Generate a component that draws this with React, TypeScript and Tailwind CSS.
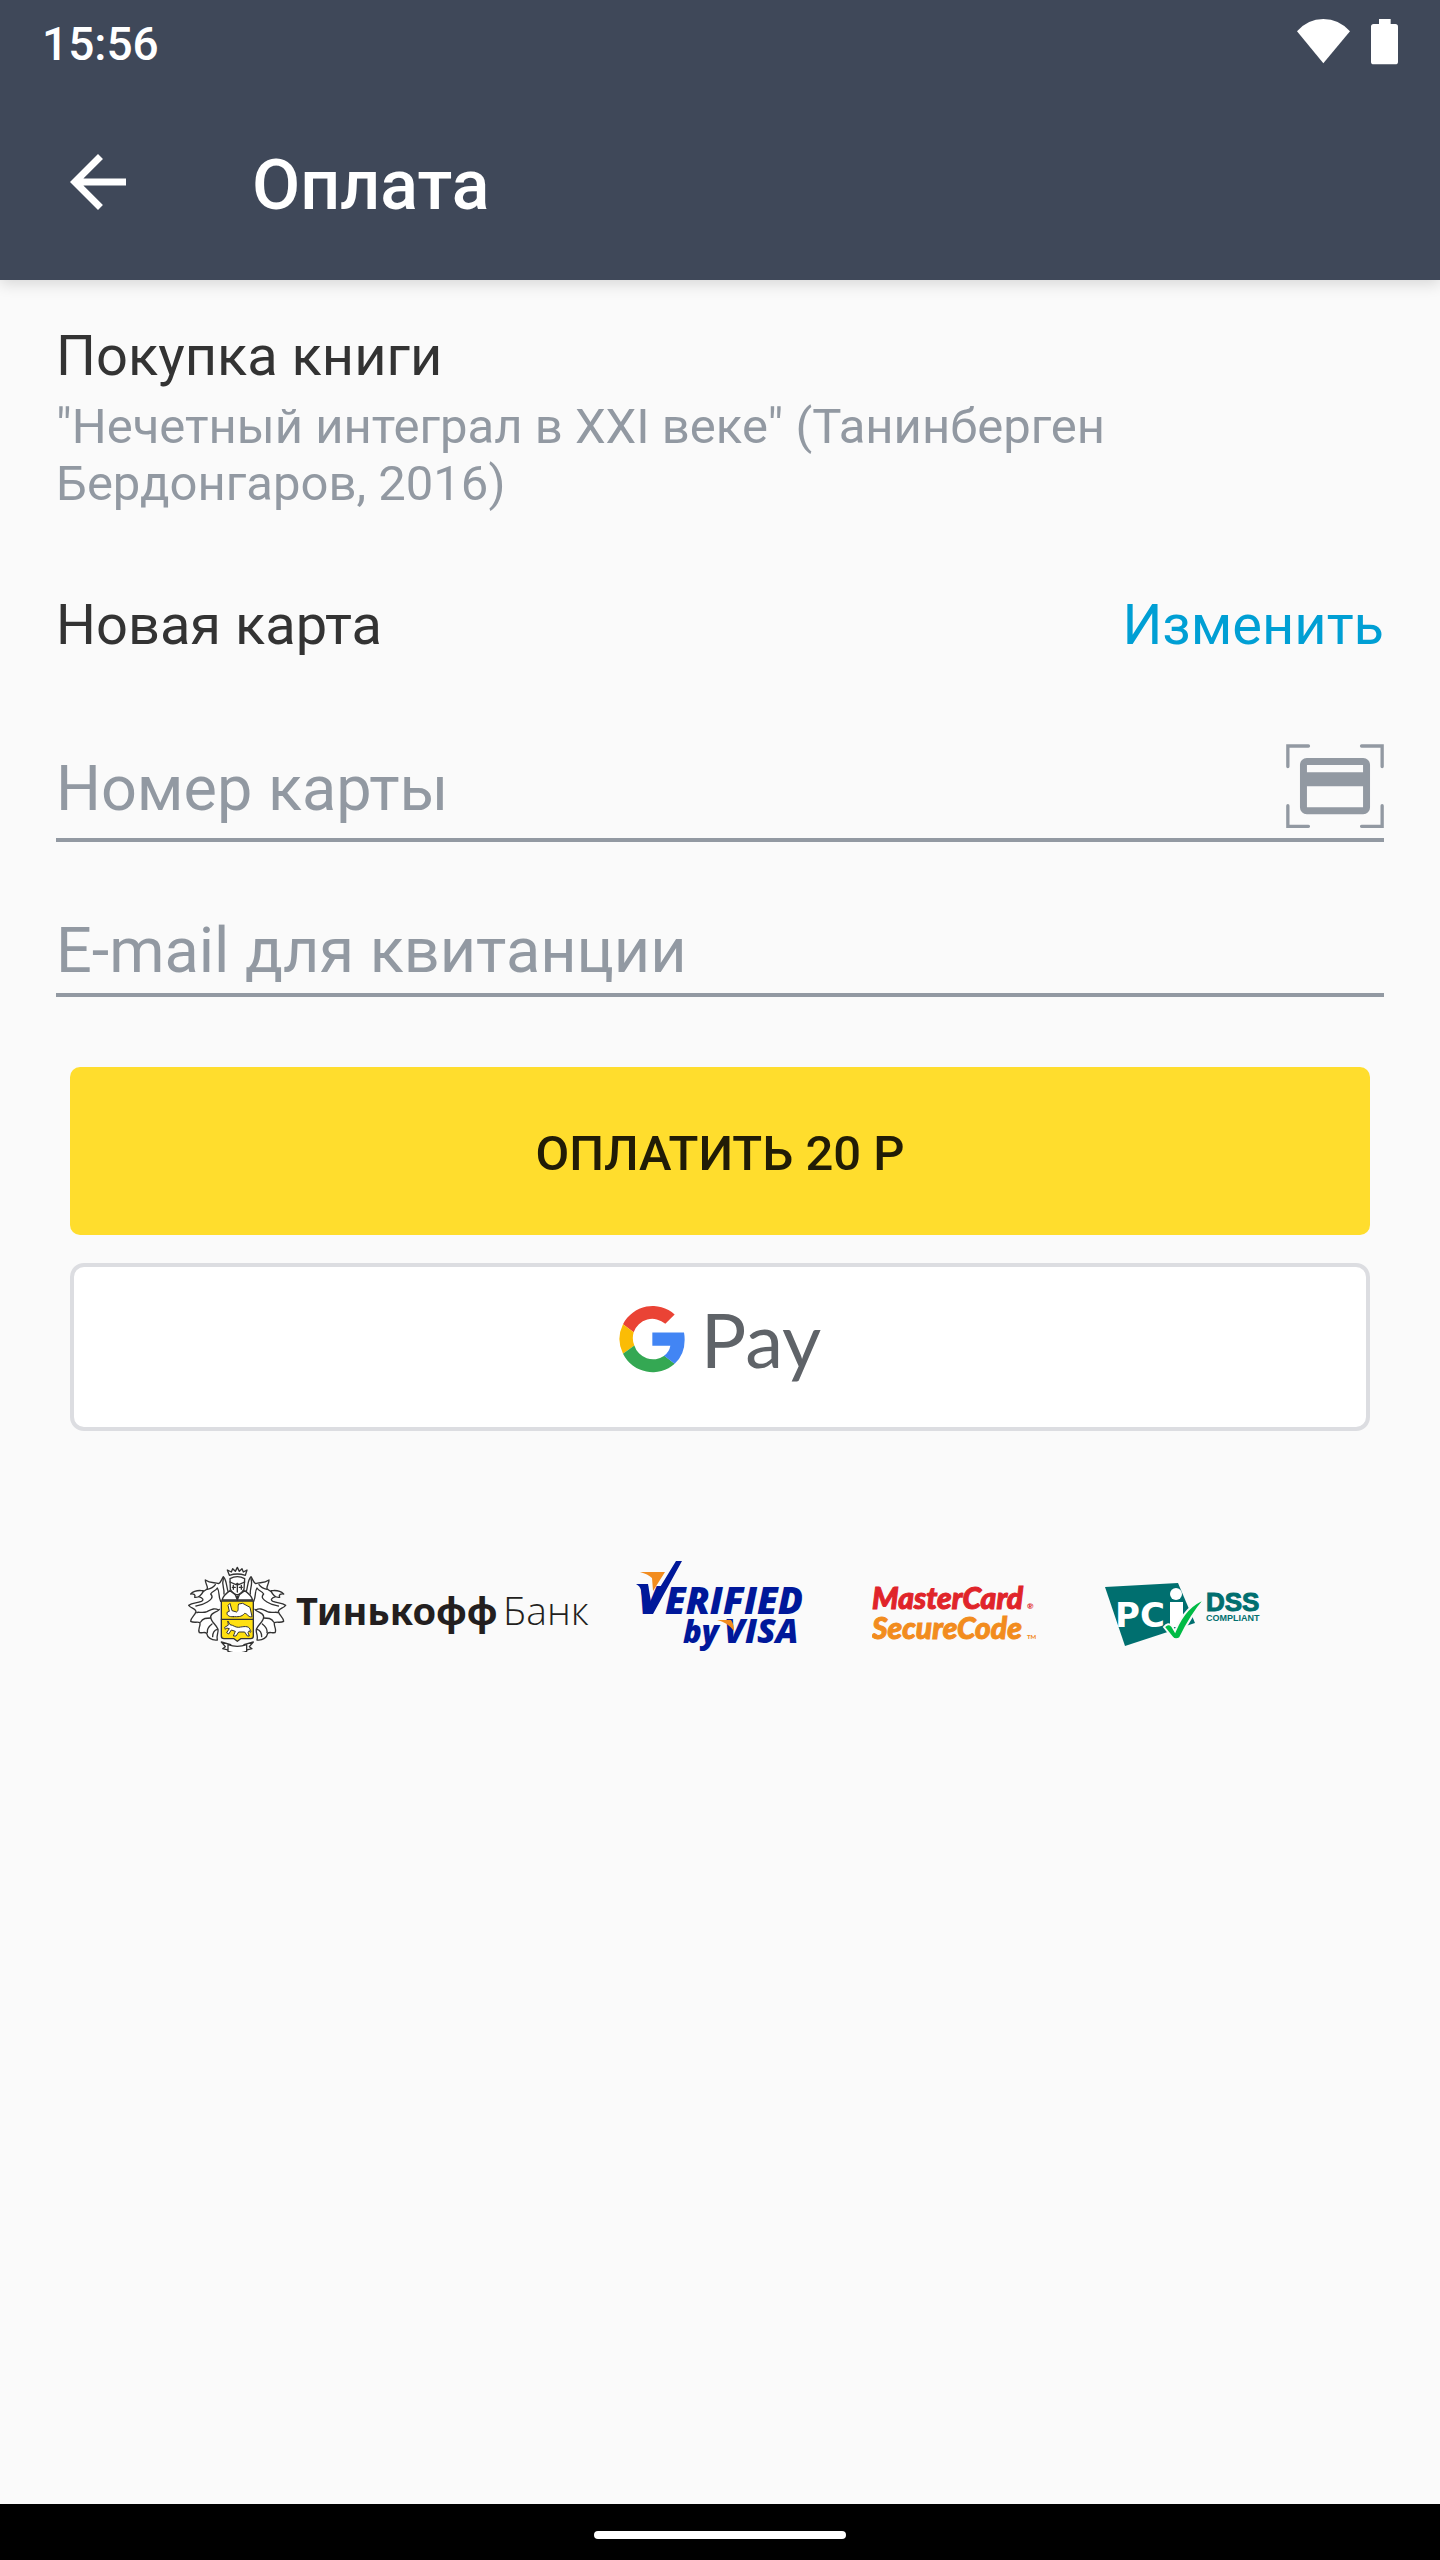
function StatusIcons() {
  return (
    <svg viewBox="171 54 303 144" className="h-12 w-[101px]" fill="#fff" aria-label="Wi-Fi, заряд батареи" role="img">
      <path d="M171 94Q203 57 250 57T330 94L250 190Z" />
      <path d="M417 57H452V72H466Q474 72 474 80V185Q474 193 466 193H401Q393 193 393 185V80Q393 72 401 72H417Z" />
    </svg>
  );
}

function ScanCardIcon() {
  return (
    <svg viewBox="558 491 294 253" className="h-[84px] w-[98px]" fill="none" stroke="#9299a2" aria-hidden="true">
      <g strokeWidth="10" strokeLinecap="round">
        <path d="M625 497H563V559M785 497H847V559M563 677V739H625M847 677V739H785" />
      </g>
      <rect x="610" y="544" width="190" height="148" rx="10" strokeWidth="21" />
      <path d="M610 597H800" strokeWidth="42" />
    </svg>
  );
}

function GoogleG() {
  return (
    <svg viewBox="300 617 198 203" className="h-[68px] w-[66px]" aria-hidden="true">
      <path fill="#ea4335" d="M312 674A100 101 0 0 1 467 645L439 673A59 59 0 0 0 344 698Z" />
      <path fill="#fbbc05" d="M312 674A101 101 0 0 0 312 763L346 738A60 60 0 0 1 344 698Z" />
      <path fill="#34a853" d="M312 763A100 101 0 0 0 467 793L436 769A59 59 0 0 1 346 738Z" />
      <path fill="#4285f4" d="M400 699H495Q497 709 497 721Q497 766 467 793L435 769Q451 758 454 739H400Z" />
    </svg>
  );
}

function CrestHalf() {
  return (
    <g>
      <path d="M176 130C168 112 172 92 160 80C154 90 152 98 146 101C134 96 122 101 106 90C106 102 114 108 112 116C104 124 92 126 86 140C100 144 102 150 94 154C80 160 68 158 56 166C64 176 74 174 78 184C76 196 62 202 62 214C72 220 82 214 90 218C92 230 82 238 88 248C98 250 104 244 110 250C112 262 124 272 142 270C138 256 146 250 144 238C138 222 122 216 122 200C124 186 138 190 148 178" />
      <path d="M152 154C144 138 150 126 142 114C136 124 128 122 122 132C132 142 122 150 112 156C100 164 86 166 78 168M146 180C132 172 122 180 108 186C94 190 84 184 80 188M122 204C110 204 98 204 92 216M126 222C118 228 110 236 112 248M142 238C134 240 128 248 128 260M160 86C154 104 164 116 162 132" />
      <path d="M62 132C76 118 88 122 100 122C96 134 86 144 74 142C78 134 70 130 62 132Z" />
      <path d="M112 118C124 116 132 110 136 104" />
    </g>
  );
}

function TinkoffLogo() {
  return (
    <svg viewBox="187 1560 403 92" className="h-[92px] w-[403px]" role="img" aria-label="Тинькофф Банк">
      <svg x="187" y="1565" width="101" height="91" viewBox="51 45 303 273">
        <g fill="#fff" stroke="#333" strokeWidth="4" strokeLinejoin="round" strokeLinecap="round">
          <CrestHalf />
          <g transform="matrix(-1 0 0 1 403 0)">
            <CrestHalf />
          </g>
          <path d="M178 76L172 60L184 66L188 56L196 64L202 52L208 64L216 56L220 66L231 60L226 76Q202 68 178 76Z" />
          <path d="M180 86Q202 74 224 86L222 118Q216 130 202 136Q187 130 181 118Z" />
          <path d="M180 96L198 104L202 100L206 104L224 96M202 100V126M190 106V118M214 106V118M187 112H196M208 112H217" fill="none" />
          <path d="M180 122C168 130 160 138 156 150H248C244 138 236 130 224 122L208 134H196Z" />
          <path d="M196 134L202 150L208 134M202 138V156" fill="none" />
          <path d="M154 153H250V258Q250 266 242 266H212L202 274L192 266H162Q154 266 154 258Z" fill="#ffe011" />
          <path d="M154 208H250" fill="none" />
          <path d="M190 200C176 202 168 194 172 186L178 184L174 166L180 160L186 182L200 186C208 180 202 172 206 162L218 160L240 172L246 200C236 204 232 190 224 190C214 202 204 200 190 200Z" strokeWidth="3" />
          <path d="M174 214L180 224C192 226 194 232 206 232C220 230 236 226 240 238C246 248 240 250 238 242L234 248L238 258H232L224 246L206 246L198 258H190L196 244L184 240L176 252L170 248L178 236L170 234L166 238L164 232L174 226Z" strokeWidth="3" />
          <path d="M154 276L182 284V302L158 296L166 290ZM250 276L222 284V302L246 296L238 290Z" />
          <path d="M174 284Q202 294 230 284V304Q202 314 174 304Z" />
        </g>
      </svg>
      <text x="296" y="1625" fill="#231f20" fontFamily='"Noto Sans", sans-serif' fontSize="38" fontWeight="700">Тинькофф</text>
      <text x="503" y="1625" fill="#231f20" fontFamily='"Open Sans", sans-serif' fontSize="39" fontWeight="300">Банк</text>
    </svg>
  );
}

function VerifiedByVisaLogo() {
  return (
    <svg viewBox="0 0 168 92" className="h-[92px] w-[168px]" role="img" aria-label="Verified by Visa">
      <g fill="#00189a" fontFamily='"Open Sans", sans-serif' fontStyle="italic" fontWeight="800">
        <text x="2" y="54" fontSize="38">V</text>
        <text x="29" y="54" fontSize="37">ERIFIED</text>
        <text x="47" y="83" fontSize="31">by</text>
        <text x="88" y="83" fontSize="34">VISA</text>
        <path d="M0 24H12L15 42L40 1H46L17 54H9L5 30Q4 26 0 24Z" />
      </g>
      <path fill="#f28c1e" d="M4 12H29L17 31L16 18Q12 14 4 12ZM81 60H95Q98 64 98 71Q91 62 81 60Z" />
    </svg>
  );
}

function SecureCodeLogo() {
  return (
    <svg viewBox="0 -23 164 92" className="h-[92px] w-[164px]" role="img" aria-label="MasterCard SecureCode">
      <g fontFamily="Lato, sans-serif" fontWeight="900">
        <text x="0" y="26" fill="#e0242a" stroke="#e0242a" fontSize="30" fontStyle="italic">MasterCard</text>
        <text x="155" y="26" fill="#e0242a" fontSize="8">®</text>
        <text x="0" y="56" fill="#f28c1e" stroke="#f28c1e" fontSize="30" fontStyle="italic">SecureCode</text>
        <text x="155" y="56" fill="#f28c1e" fontSize="6">TM</text>
      </g>
    </svg>
  );
}

function PciLogo() {
  return (
    <svg viewBox="0 -21 160 92" className="h-[92px] w-40" role="img" aria-label="PCI DSS Compliant">
      <path fill="#006f6f" d="M1 6L74 2L91 42L21 65Z" />
      <text x="11" y="46" fill="#fff" fontFamily='"DejaVu Sans", sans-serif' fontSize="34" fontWeight="700">PC</text>
      <circle cx="72" cy="13" r="6" fill="#fff" />
      <path fill="#fff" d="M66 21H79V46H66Z" />
      <path fill="#00bb45" stroke="#fafafa" strokeWidth="2" d="M60 46Q64 41 68 45L71 50Q82 24 101 18Q87 34 76 57Q71 60 68 56Z" />
      <g fill="#006f6f" fontFamily='"Liberation Sans", sans-serif' fontWeight="700">
        <text x="102" y="30" fontSize="26" stroke="#006f6f">DSS</text>
        <text x="102" y="40" fontSize="9">COMPLIANT</text>
      </g>
    </svg>
  );
}

export default function App() {
  return (
    <div className="flex min-h-screen flex-col bg-[#fafafa] font-[Roboto,sans-serif] text-[#333]">
      <header className="relative bg-[#3f4859] text-white shadow-[0_4px_14px_rgba(0,0,0,0.14)]">
        <div className="flex h-[84px] items-center justify-between px-[42px]">
          <time className="pt-1 text-[46px] leading-[54px] font-medium">15:56</time>
          <StatusIcons />
        </div>
        <div className="flex h-[196px] items-center px-14">
          <button type="button" aria-label="Назад" className="size-[84px]">
            <svg viewBox="0 0 24 24" fill="currentColor" aria-hidden="true">
              <path d="M20 11H7.83l5.59-5.59L12 4l-8 8 8 8 1.41-1.41L7.83 13H20v-2z" />
            </svg>
          </button>
          <h1 className="ml-28 pt-1.5 text-[70px] leading-[82px] font-medium">Оплата</h1>
        </div>
      </header>

      <main className="flex-1 px-14 pt-[43px]">
        <h2 className="text-[56px] leading-[66px]">Покупка книги</h2>
        <p className="mt-[9px] max-w-[1120px] text-[49px] leading-[57px] text-[#9299a2]">
          "Нечетный интеграл в XXI веке" (Танинберген Бердонгаров, 2016)
        </p>

        <form onSubmit={(e) => e.preventDefault()}>
          <div className="mt-20 flex items-center justify-between text-[56px] leading-[66px]">
            <h2>Новая карта</h2>
            <button type="button" className="text-[#009fd4]">Изменить</button>
          </div>

          <div className="mt-[86px] flex items-center border-b-4 border-[#9299a2] pb-[10px]">
            <input
              type="text"
              inputMode="numeric"
              aria-label="Номер карты"
              placeholder="Номер карты"
              className="h-[78px] min-w-0 flex-1 pt-1 text-[63px] leading-[74px] outline-none placeholder:text-[#9299a2]"
            />
            <button type="button" aria-label="Сканировать карту">
              <ScanCardIcon />
            </button>
          </div>

          <div className="mt-[72px] border-b-4 border-[#9299a2] pb-[5px]">
            <input
              type="email"
              aria-label="E-mail для квитанции"
              placeholder="E-mail для квитанции"
              className="block h-[74px] w-full text-[63px] leading-[74px] outline-none placeholder:text-[#9299a2]"
            />
          </div>

          <div className="mx-[14px] mt-[70px] flex flex-col gap-7">
            <button type="submit" className="h-[168px] rounded-[10px] bg-[#ffdd2d] pt-1 text-[49px] leading-[57px] font-medium text-[#211c06]">
              ОПЛАТИТЬ 20 Р
            </button>
            <button type="button" className="flex h-[168px] items-center justify-center gap-4 rounded-[14px] border-4 border-[#dcdde1] bg-white pb-4">
              <GoogleG />
              <span className="font-[Lato,sans-serif] text-[76px] leading-[92px] text-[#5f6368]">Pay</span>
            </button>
          </div>
        </form>

        <div className="mt-[129px] flex justify-center gap-[68px] pl-[11px]">
          <div className="flex gap-[46px]">
            <TinkoffLogo />
            <VerifiedByVisaLogo />
          </div>
          <SecureCodeLogo />
          <PciLogo />
        </div>
      </main>

      <footer className="flex h-14 justify-center bg-black pt-[27px]">
        <div className="h-2 w-[252px] rounded-full bg-white" />
      </footer>
    </div>
  );
}
